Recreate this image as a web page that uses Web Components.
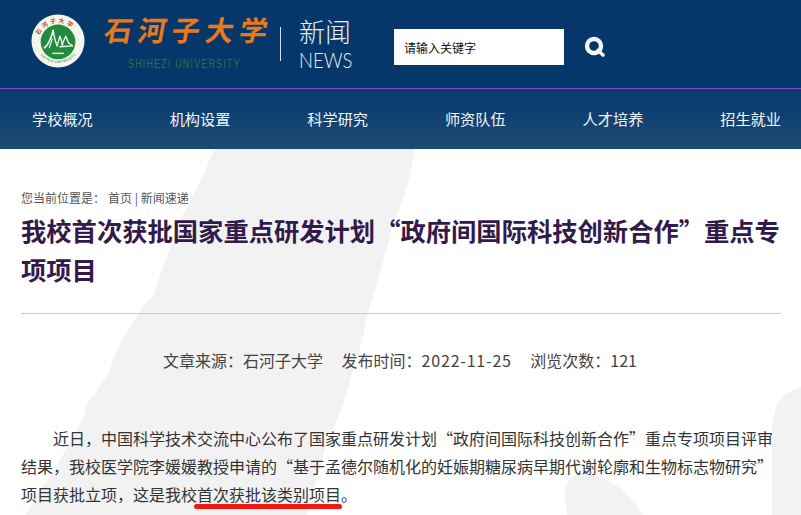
<!DOCTYPE html>
<html lang="zh"><head><meta charset="utf-8"><style>
html,body{margin:0;padding:0;background:#fff}
body{width:801px;height:515px;overflow:hidden;font-family:"Liberation Sans","Noto Sans CJK SC",sans-serif}
</style></head><body>
<site-header></site-header>
<site-nav>
<span>学校概况</span><span>机构设置</span><span>科学研究</span><span>师资队伍</span><span>人才培养</span><span>招生就业</span>
</site-nav>
<article-page></article-page>
<script>
function def(name,html){customElements.define(name,class extends HTMLElement{constructor(){super();this.attachShadow({mode:'open'}).innerHTML=html}})}
def('uni-logo',`<style>:host{display:block;width:54px;height:54px}svg{display:block}</style>
<svg width="54" height="54" viewBox="0 0 56 56"><defs><path id="t" d="M7 30 A21 21 0 0 1 49 30"/><path id="b" d="M5.500 30 A23 23 0 0 0 50.500 30"/></defs>
<circle cx="28" cy="28" r="27.500" fill="#f4f6ee"/><circle cx="28" cy="29" r="18" fill="#218a3c"/>
<g fill="none" stroke="#f4f6ee" stroke-linecap="round" stroke-linejoin="round"><path d="M14 35 C18 32 21 25 23 17" stroke-width="1.800"/><path d="M23 17 C24 23 25 28 27 33" stroke-width="1.400"/><path d="M27 33 L30 23 L33 32" stroke-width="1.400"/><path d="M32 32 L36 23 L39 30 L43 33 L30 34" stroke-width="1.400"/><path d="M19 35 L22 26" stroke-width="1.200"/></g>
<text font-family="Noto Sans CJK SC" font-size="6" font-weight="700" fill="#c8421c" letter-spacing="2.400"><textPath href="#t" startOffset="8">石河子大学</textPath></text>
<text font-family="Liberation Sans" font-size="3.700" fill="#2f7d46" text-anchor="middle"><textPath href="#b" startOffset="50%" dominant-baseline="hanging">SHIHEZI UNIVERSITY</textPath></text>
<rect x="22" y="40" width="12" height="1.600" fill="#d9eadb"/></svg>`);
def('site-header',`<style>:host{display:flex;align-items:flex-start;height:88px;background:#06376a;box-sizing:border-box}
.logo{margin:14px 0 0 31px}
.name{margin:7px 0 0 16px;width:179px;display:flex;flex-direction:column;align-items:flex-start}
.cn{font:bold 28px/44px "Noto Sans CJK SC",serif;color:#e87a1c;letter-spacing:5.750px;white-space:nowrap;transform:skewX(-10deg);transform-origin:left bottom}
.en{font:9px/13px "Liberation Sans",sans-serif;color:#1f7a3a;letter-spacing:1.150px;margin:7px 0 0 27px;white-space:nowrap;transform:scaleY(1.350)}
.rule{width:1px;height:34px;background:#d5dde6;margin:27px 0 0 0}
.news{margin:16px 0 0 18px;color:#e8edf3;width:57px}
.zh{font:300 26px/30px "Noto Sans CJK SC",sans-serif}
.nw{font:300 18.500px/22px Lato,sans-serif;margin-top:3px;transform:scaleY(1.150);transform-origin:left center}
.search{margin:29px 0 0 38px;width:170px;height:36px;background:#fff;display:flex;align-items:center;box-sizing:border-box;padding-left:10px;font:12px "Noto Sans CJK SC",sans-serif;color:#111}
.ico{margin:36px 0 0 20px;display:block}
</style><uni-logo class="logo"></uni-logo>
<div class="name"><div class="cn">石河子大学</div><div class="en">SHIHEZI UNIVERSITY</div></div>
<div class="rule"></div>
<div class="news"><div class="zh">新闻</div><div class="nw">NEWS</div></div>
<div class="search">请输入关键字</div>
<svg class="ico" width="22" height="22" viewBox="0 0 22 22"><circle cx="10" cy="10" r="7" fill="none" stroke="#f3f6f9" stroke-width="4.400"/><path d="M14 14.500L19 19" stroke="#f3f6f9" stroke-width="3.600" stroke-linecap="round"/></svg>`);
def('site-nav',`<style>:host{display:block;height:60px;background:linear-gradient(#073a6e,#1d4a74);border-top:1px solid #8b45c8}
.r{display:flex;justify-content:space-between;padding:0 20px 2px 32px;height:58px;align-items:center;font:15.200px "Noto Sans CJK SC",sans-serif;color:#f4f7fa}
::slotted(span){display:block}</style><div class="r"><slot></slot></div>`);
def('article-page',`<style>:host{display:block;position:relative;height:366px;overflow:hidden;background:#fff;font-family:"Noto Sans CJK SC",sans-serif}
.bg{position:absolute;left:0;top:0}
.c{position:relative;padding:40px 20px 0 21px}
.crumb{font-size:12px;line-height:18px;color:#555}
.crumb i{font-style:normal;margin-left:3px}
h1{margin:4px 0 0;font:bold 25.300px/39px "Noto Sans CJK SC",sans-serif;color:#341a4b}
hr{border:0;border-top:1px solid #ccc;margin:24px 0 0}
.meta{text-align:center;font-size:16px;line-height:24px;color:#444;margin:34px 2px 0 0}
.meta b{font-weight:400;letter-spacing:.8px}
.meta span+span{margin-left:18.500px}
.body{margin:52px 0 0;font-size:16px;line-height:28px;color:#333}
.body>div{white-space:nowrap}
.first{padding-left:32px}
.hl{position:relative;display:inline-block}
.hl::after{content:"";position:absolute;left:-3px;right:-1px;bottom:-1px;height:5px;border-radius:3px;background:#f2180f}
</style>
<svg class="bg" width="801" height="366" viewBox="0 0 801 366"><g fill="#f2f2f3">
<path d="M215 0 L415 0 C408 40 400 60 393 74 C385 110 376 135 368 164 C362 190 358 210 352 224 C345 255 335 275 327 291 C320 320 312 345 307 366 L26 366 C35 345 45 335 54 324 C65 300 75 285 84 268 C85 258 86 255 87 254 C95 245 102 235 110 221 C118 195 125 185 135 171 C140 160 146 152 153 148 C160 125 170 100 179 74 C190 50 200 35 207 18 C209 10 212 5 215 0Z"/>
<path d="M801 238 C785 243 777 250 775 262 C772 272 772 280 772 290 L772 366 L801 366Z"/>
<path d="M580 324 C568 328 565 338 565 350 L567 366 L643 366 C630 345 610 326 580 324Z"/></g></svg>
<div class="c"><div class="crumb">您当前位置是：<i>首页 | 新闻速递</i></div>
<h1>我校首次获批国家重点研发计划“政府间国际科技创新合作”重点专项项目</h1><hr>
<div class="meta"><span>文章来源：石河子大学</span><span>发布时间：<b>2022-11-25</b></span><span>浏览次数：121</span></div>
<div class="body"><div class="first">近日，中国科学技术交流中心公布了国家重点研发计划“政府间国际科技创新合作”重点专项项目评审</div>
<div>结果，我校医学院李媛媛教授申请的“基于孟德尔随机化的妊娠期糖尿病早期代谢轮廓和生物标志物研究”</div>
<div><span>项目获批立项，这是我校</span><span class="hl">首次获批该类别项目</span><span>。</span></div></div></div>`);
</script></body></html>
